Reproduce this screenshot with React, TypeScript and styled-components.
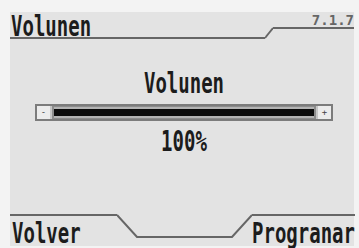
import styled, { createGlobalStyle } from 'styled-components';

const GlobalStyle = createGlobalStyle`
  html, body {
    margin: 0;
    padding: 0;
    background: #f3f3f3;
  }
`;

const Frame = styled.div`
  width: 359px;
  height: 248px;
  box-sizing: border-box;
  padding: 12px 5px 2px 10px;
  background: #f3f3f3;
  overflow: hidden;
`;

const Screen = styled.div`
  height: 100%;
  display: flex;
  flex-direction: column;
  background: #e3e3e3;
  font-family: 'DejaVu Sans Mono', monospace;
  color: #1c1c1c;
`;

// tall, narrow lcd lettering
const Lcd = styled.span`
  display: inline-block;
  font-size: 19px;
  font-weight: bold;
  line-height: 19px;
  height: 19px;
  white-space: pre;
  transform: scaleY(1.45);
  transform-origin: 50% 16px;
`;

const Header = styled.div`
  display: flex;
  height: 27px;
  flex-shrink: 0;
`;

const TitleTab = styled.div`
  flex: 1;
  padding: 8px 0 0 1px;
  border-bottom: 2px solid #666;
`;

const VersionTab = styled.div`
  width: 81px;
  height: 15px;
  box-sizing: content-box;
  border-bottom: 2px solid #666;
  display: flex;
  justify-content: flex-end;
  align-items: flex-end;
`;

const Version = styled.span`
  font-size: 14px;
  font-weight: bold;
  line-height: 14px;
  color: #666;
`;

const Slant = styled.svg`
  display: block;
  flex-shrink: 0;
`;

const Body = styled.div`
  flex: 1;
  display: flex;
  flex-direction: column;
  align-items: center;
  padding: 38px 0 0 4px;
`;

const Gap = styled.div<{ h: number }>`
  height: ${(p) => p.h}px;
  flex-shrink: 0;
`;

const Slider = styled.div`
  width: 298px;
  height: 17px;
  flex-shrink: 0;
  box-sizing: border-box;
  border: 2px solid #7c7c7c;
  background: #c6c6c6;
  display: flex;
  align-items: stretch;
`;

const StepCell = styled.div`
  width: 13px;
  background: #ececec;
  display: flex;
  align-items: center;
  justify-content: center;
  font-size: 9px;
  line-height: 9px;
  color: #444;
`;

const Track = styled.div`
  flex: 1;
  margin: 0 2px;
  border: 2px solid #8c8c8c;
  border-top-width: 1px;
  border-bottom-width: 1px;
  background: #b4b4b4;
  display: flex;
  align-items: center;
`;

const Fill = styled.div`
  height: 7px;
  width: 100%;
  background: #0c0c0c;
`;

const Footer = styled.div`
  display: flex;
  height: 32px;
  flex-shrink: 0;
`;

const SoftKey = styled.div<{ align: 'left' | 'right' }>`
  display: flex;
  justify-content: ${(p) => (p.align === 'left' ? 'flex-start' : 'flex-end')};
  border-top: 2px solid #666;
  padding-top: 11px;
  ${(p) => (p.align === 'left' ? 'width: 107px; padding-left: 2px;' : 'flex: 1; margin-right: -1px;')}
`;

export default function App() {
  return (
    <>
      <GlobalStyle />
      <Frame>
        <Screen>
          <Header>
            <TitleTab>
              <Lcd>Volunen</Lcd>
            </TitleTab>
            <Slant width="8" height="27" viewBox="0 0 8 27">
              <line x1="0" y1="26" x2="8" y2="16" stroke="#666" strokeWidth="2" />
            </Slant>
            <VersionTab>
              <Version>7.1.7</Version>
            </VersionTab>
          </Header>
          <Body>
            <Lcd>Volunen</Lcd>
            <Gap h={8} />
            <Slider>
              <StepCell>-</StepCell>
              <Track>
                <Fill />
              </Track>
              <StepCell>+</StepCell>
            </Slider>
            <Gap h={14} />
            <Lcd>100%</Lcd>
          </Body>
          <Footer>
            <SoftKey align="left">
              <Lcd>Volver</Lcd>
            </SoftKey>
            <Slant width="135" height="24" viewBox="0 0 135 24">
              <polyline
                points="0,1 20,23 115,23 135,1"
                fill="none"
                stroke="#666"
                strokeWidth="2"
              />
            </Slant>
            <SoftKey align="right">
              <Lcd>Progranar</Lcd>
            </SoftKey>
          </Footer>
        </Screen>
      </Frame>
    </>
  );
}
